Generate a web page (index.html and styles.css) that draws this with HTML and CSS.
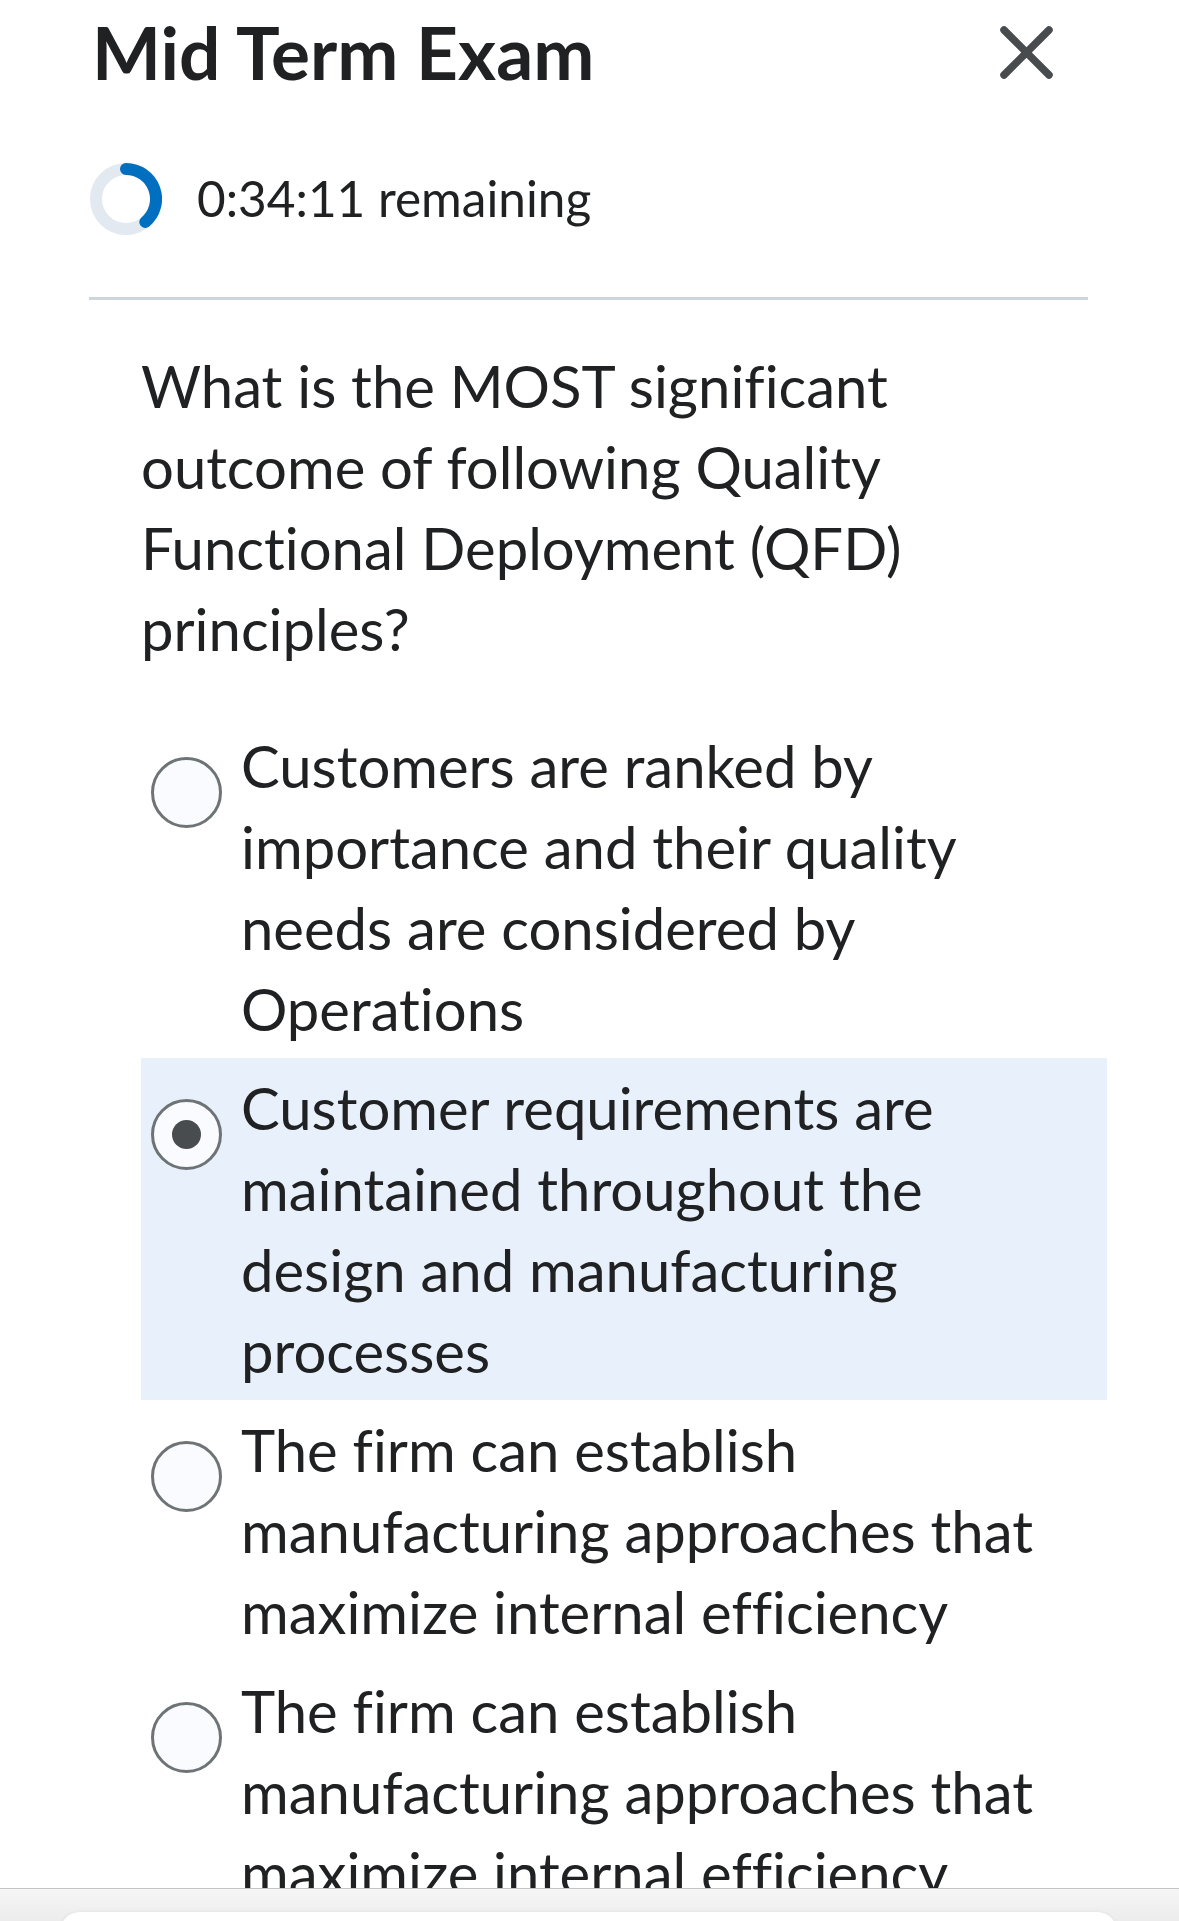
FILE: index.html
```html
<!DOCTYPE html>
<html lang="en">
<head>
<meta charset="utf-8">
<title>Mid Term Exam</title>
<link rel="stylesheet" href="styles.css">
</head>
<body>
<div class="page">
  <header class="header">
    <h1 class="title">Mid Term Exam</h1>
    <button class="close" aria-label="Close">
      <svg width="60" height="60" viewBox="0 0 60 60"><path d="M7 7 L52 52 M52 7 L7 52" stroke="#494c4e" stroke-width="7.5" stroke-linecap="round" fill="none"/></svg>
    </button>
  </header>

  <div class="timer">
    <svg class="ring" width="72" height="72" viewBox="0 0 72 72">
      <circle cx="36" cy="36" r="30" fill="none" stroke="#e3e9f1" stroke-width="12"/>
      <path d="M36 6 A30 30 0 0 1 55.3 59" fill="none" stroke="#006fbf" stroke-width="12" stroke-linecap="round"/>
    </svg>
    <span class="timer-text">0:34:11 remaining</span>
  </div>

  <hr class="divider">

  <p class="question">What is the MOST significant outcome of following Quality Functional Deployment (QFD) principles?</p>

  <div class="options">
    <label class="option">
      <span class="radio"></span>
      <span class="option-text">Customers are ranked by importance and their quality needs are considered by Operations</span>
    </label>
    <label class="option selected">
      <span class="radio"><span class="dot"></span></span>
      <span class="option-text">Customer requirements are maintained throughout the design and manufacturing processes</span>
    </label>
    <label class="option">
      <span class="radio"></span>
      <span class="option-text">The firm can establish manufacturing approaches that maximize internal efficiency</span>
    </label>
    <label class="option">
      <span class="radio"></span>
      <span class="option-text">The firm can establish manufacturing approaches that maximize internal efficiency</span>
    </label>
  </div>
</div>

<div class="toolbar">
  <div class="toolbar-field"></div>
</div>
</body>
</html>
```

FILE: styles.css
```css
html, body {
  margin: 0;
  padding: 0;
  background: #ffffff;
  overflow: hidden;
  height: 1921px;
}

body {
  font-family: Lato, "Open Sans", sans-serif;
  color: #202122;
  font-variant-ligatures: none;
}

.page {
  width: 1179px;
}

.header {
  display: flex;
  align-items: center;
  justify-content: space-between;
  padding: 9px 122px 0 92px;
}

.title {
  margin: 0;
  font-size: 73px;
  font-weight: 700;
  line-height: 1.2;
  color: #202122;
}

.close {
  border: 0;
  background: none;
  padding: 0;
  width: 60px;
  height: 60px;
  display: flex;
}

.timer {
  display: flex;
  align-items: center;
  gap: 35px;
  margin-top: 66px;
  padding-left: 90px;
}

.ring {
  display: block;
  flex: none;
}

.timer-text {
  font-size: 49.5px;
  line-height: 1.2;
  color: #202122;
}

.divider {
  margin: 62px 0 0 89px;
  width: 999px;
  height: 3px;
  border: 0;
  background: #cdd5dd;
}

.question {
  margin: 45px 0 0 141px;
  width: 936px;
  font-size: 58px;
  line-height: 81px;
}

.options {
  margin: 47px 0 0 141px;
  width: 966px;
  display: flex;
  flex-direction: column;
}

.option {
  display: flex;
  align-items: flex-start;
  gap: 19px;
  padding: 9px 30px 9px 10px;
}

.option.selected {
  background: #e8f0fb;
}

.radio {
  flex: none;
  box-sizing: border-box;
  width: 71px;
  height: 71px;
  margin-top: 32px;
  border: 3px solid #6e7376;
  border-radius: 50%;
  background: #f9fbff;
  display: flex;
  align-items: center;
  justify-content: center;
}

.dot {
  width: 29px;
  height: 29px;
  border-radius: 50%;
  background: #494c4e;
}

.option-text {
  font-size: 58px;
  line-height: 81px;
  color: #202122;
}

.toolbar {
  position: fixed;
  left: 0;
  right: 0;
  bottom: 0;
  height: 32px;
  border-top: 1px solid #c4c4c4;
  background: linear-gradient(#f6f6f6, #ececec);
  overflow: hidden;
}

.toolbar-field {
  margin: 23px 62px 0 60px;
  height: 40px;
  border-radius: 22px;
  background: #ffffff;
  box-shadow: 0 0 4px rgba(0, 0, 0, 0.06);
}
```
